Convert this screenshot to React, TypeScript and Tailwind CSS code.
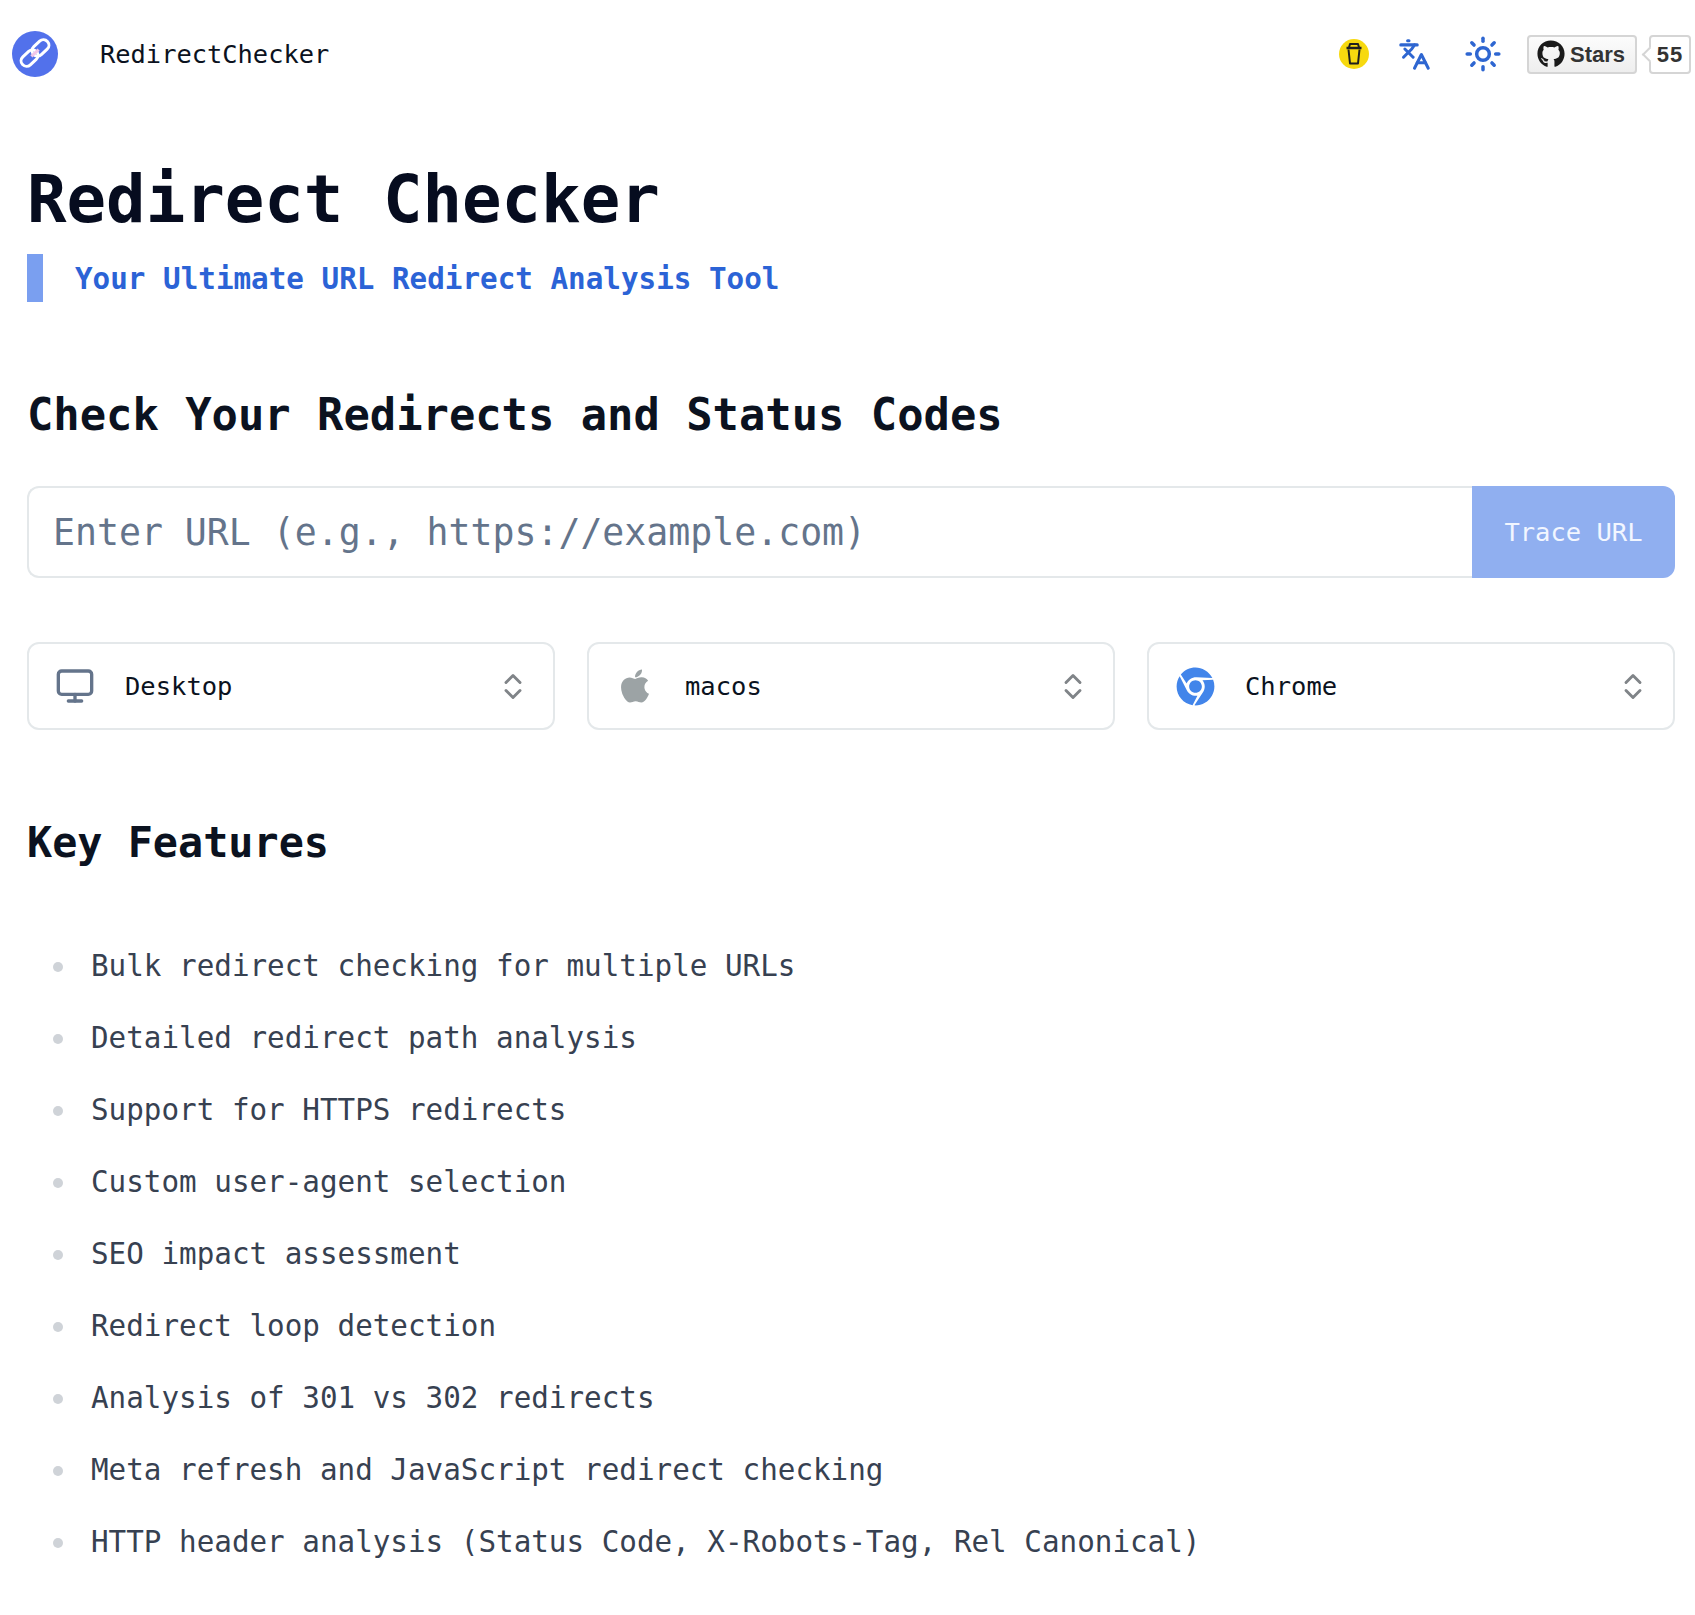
import React from 'react';
import { ChevronDown, ChevronUp, Languages, Monitor, Sun } from 'lucide-react';
import { FaApple, FaChrome, FaGithub } from 'react-icons/fa';

const features = [
  'Bulk redirect checking for multiple URLs',
  'Detailed redirect path analysis',
  'Support for HTTPS redirects',
  'Custom user-agent selection',
  'SEO impact assessment',
  'Redirect loop detection',
  'Analysis of 301 vs 302 redirects',
  'Meta refresh and JavaScript redirect checking',
  'HTTP header analysis (Status Code, X-Robots-Tag, Rel Canonical)',
];

function LogoMark() {
  return (
    <svg viewBox="0 0 46 46" className="h-[46px] w-[46px]">
      <circle cx="23" cy="23" r="23" fill="#5271eb" />
      <g transform="rotate(-43 23 22)" fill="none" strokeWidth="3">
        <rect x="6" y="16.500" width="19" height="11" rx="5.500" stroke="#ffffff" />
        <rect x="21" y="16.500" width="19" height="11" rx="5.500" stroke="#ffffff" />
        <path d="M18 22h10" stroke="#f3c6e8" />
      </g>
    </svg>
  );
}

function CoffeeBadge() {
  return (
    <div className="flex h-[30px] w-[30px] items-center justify-center rounded-full bg-[#f7d90f]">
      <svg viewBox="0 0 20 24" className="h-[24px] w-[20px]" fill="none" stroke="#1f1f1f" strokeWidth="2" strokeLinejoin="round">
        <path d="M5 5.500 6 2h8l1 3.500" />
        <path d="M2.500 6h15" strokeWidth="2.500" />
        <path d="M4.500 7.500 6 21.500h8l1.500-14" />
      </svg>
    </div>
  );
}

function GithubStars() {
  return (
    <div className="flex items-center font-['Liberation_Sans',sans-serif] text-[22px] font-bold text-[#333]">
      <div className="flex h-[39px] w-[110px] items-center gap-[5px] rounded-[4px] border-2 border-[#d5d5d5] bg-gradient-to-b from-[#fcfcfc] to-[#eeeeee] pl-[8px]">
        <FaGithub className="h-[28px] w-[28px] text-[#1b1b1b]" />
        <span>Stars</span>
      </div>
      <div className="relative ml-[12px] flex h-[39px] w-[42px] items-center justify-center rounded-[4px] border-2 border-[#d5d5d5] bg-white tracking-[1px]">
        <span className="absolute left-[-7px] top-[12px] h-[11px] w-[11px] rotate-45 border-b-2 border-l-2 border-[#d5d5d5] bg-white" />
        <span className="relative">55</span>
      </div>
    </div>
  );
}

function SelectBox({ icon, label }: { icon: React.ReactNode; label: string }) {
  return (
    <div className="flex h-[88px] items-center rounded-[12px] border-2 border-[#e4e8ea] bg-white">
      <div className="flex w-[96px] shrink-0 justify-center pr-[4px]">{icon}</div>
      <span className="flex-1 text-[25.5px] text-[#0b1220]">{label}</span>
      <div className="mr-[26px] flex flex-col items-center text-[#808488]">
        <ChevronUp className="mb-[-13px] h-[28px] w-[28px]" strokeWidth={2.5} />
        <ChevronDown className="h-[28px] w-[28px]" strokeWidth={2.5} />
      </div>
    </div>
  );
}

export default function App() {
  return (
    <div className="min-h-[1615px] bg-white font-['DejaVu_Sans_Mono',monospace] text-[#0b1220]">
      <header className="flex h-[108px] items-center justify-between pl-[12px] pr-[4px]">
        <div className="flex items-center">
          <LogoMark />
          <span className="ml-[42px] text-[25.4px]">RedirectChecker</span>
        </div>
        <div className="flex items-center">
          <CoffeeBadge />
          <Languages className="ml-[29px] h-[33px] w-[33px] text-[#2e66d1]" strokeWidth={2.2} />
          <Sun className="ml-[33px] h-[38px] w-[38px] text-[#2e66d1]" strokeWidth={2.2} />
          <div className="ml-[25px]">
            <GithubStars />
          </div>
        </div>
      </header>

      <main className="pl-[27px] pr-[20px]">
        <h1 className="mt-[51px] text-[65.7px] font-bold leading-[80px] text-[#060c1f]">Redirect Checker</h1>
        <p className="mt-[15px] h-[48px] border-l-[16px] border-[#7a9ff0] pl-[32px] text-[29.25px] font-bold leading-[50px] text-[#2b63d6]">
          Your Ultimate URL Redirect Analysis Tool
        </p>

        <h2 className="mt-[85px] text-[43.8px] font-bold leading-[56px]">Check Your Redirects and Status Codes</h2>

        <div className="mt-[43px] flex h-[92px]">
          <div className="flex flex-1 items-center rounded-l-[12px] border-2 border-r-0 border-[#e4e8ea] pl-[24px] pt-[2px] text-[36.5px] text-[#64748b]">
            Enter URL (e.g., https://example.com)
          </div>
          <button className="w-[203px] rounded-r-[12px] bg-[#90aff0] text-[25.5px] text-[#f2f6ff]">Trace URL</button>
        </div>

        <div className="mt-[64px] grid grid-cols-3 gap-[32px]">
          <SelectBox icon={<Monitor className="h-[40px] w-[40px] text-[#64748b]" strokeWidth={2} />} label="Desktop" />
          <SelectBox icon={<FaApple className="h-[38px] w-[38px] text-[#9ca3a5]" />} label="macos" />
          <SelectBox icon={<FaChrome className="h-[39px] w-[39px] text-[#4285ea]" />} label="Chrome" />
        </div>

        <h2 className="mt-[87px] text-[41.8px] font-bold leading-[52px]">Key Features</h2>

        <ul className="mt-[62px] flex flex-col">
          {features.map((feature) => (
            <li key={feature} className="flex h-[72px] items-center text-[29.25px] text-[#374151]">
              <span className="ml-[26px] mr-[28px] h-[10px] w-[10px] rounded-full bg-[#cfd3d8]" />
              {feature}
            </li>
          ))}
        </ul>
      </main>
    </div>
  );
}
